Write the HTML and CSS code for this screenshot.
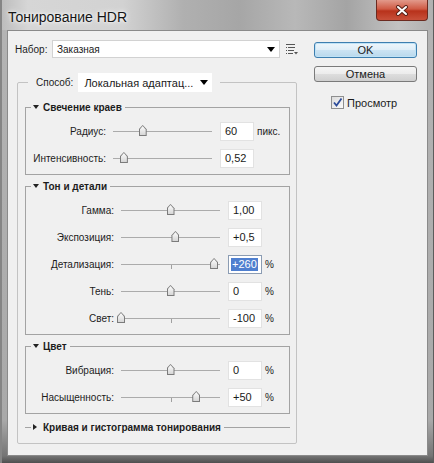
FILE: index.html
```html
<!DOCTYPE html>
<html lang="ru">
<head>
    <meta charset="UTF-8">
    <meta name="viewport" content="width=device-width, initial-scale=1.0">
    <title>Тонирование HDR</title>
    <link rel="stylesheet" href="styles.css">
</head>
<body>
    <div class="window">
        <div class="titlebar">
            <span class="title">Тонирование HDR</span>
            <button class="close" aria-label="Закрыть">
                <svg width="14" height="11" viewBox="0 0 14 11">
                    <path d="M3 2L11 9M11 2L3 9" stroke="#5a2218" stroke-width="4" stroke-linecap="round"/>
                    <path d="M3 2L11 9M11 2L3 9" stroke="#fff" stroke-width="2" stroke-linecap="round"/>
                </svg>
            </button>
        </div>

        <div class="client">
            <div class="main">
                <div class="preset">
                    <span class="preset-label">Набор:</span>
                    <div class="combo combo-preset"><span>Заказная</span><i class="arrow"></i></div>
                    <svg class="menu-icon" width="12" height="11" viewBox="0 0 12 11">
                        <g fill="#555">
                            <rect x="0" y="0" width="9" height="1"/>
                            <rect x="0" y="3" width="1" height="1"/><rect x="2" y="3" width="7" height="1"/>
                            <rect x="0" y="6" width="1" height="1"/><rect x="2" y="6" width="6" height="1"/>
                            <rect x="0" y="9" width="1" height="1"/><rect x="2" y="9" width="5" height="1"/>
                            <path d="M8 8h4l-2 2.5z"/>
                        </g>
                    </svg>
                </div>

                <fieldset class="group">
                    <legend class="group-legend">
                        <span>Способ:</span>
                        <div class="combo combo-method"><span>Локальная адаптац...</span><i class="arrow"></i></div>
                    </legend>

                    <fieldset class="panel panel-edge">
                        <legend class="panel-legend"><i class="tri-down"></i>Свечение краев</legend>
                        <div class="rows">
                            <div class="row">
                                <span class="label">Радиус:</span>
                                <div class="slider"><i class="thumb" style="left: 30%"></i></div>
                                <span class="field">60</span>
                                <span class="unit">пикс.</span>
                            </div>
                            <div class="row">
                                <span class="label">Интенсивность:</span>
                                <div class="slider"><i class="thumb" style="left: 11%"></i></div>
                                <span class="field">0,52</span>
                            </div>
                        </div>
                    </fieldset>

                    <fieldset class="panel">
                        <legend class="panel-legend"><i class="tri-down"></i>Тон и детали</legend>
                        <div class="rows">
                            <div class="row">
                                <span class="label">Гамма:</span>
                                <div class="slider"><i class="thumb" style="left: 50%"></i></div>
                                <span class="field">1,00</span>
                            </div>
                            <div class="row">
                                <span class="label">Экспозиция:</span>
                                <div class="slider"><i class="thumb" style="left: 55%"></i></div>
                                <span class="field">+0,5</span>
                            </div>
                            <div class="row">
                                <span class="label">Детализация:</span>
                                <div class="slider"><i class="tick"></i><i class="thumb" style="left: 94%"></i></div>
                                <span class="field field-focus"><span class="selected">+260</span></span>
                                <span class="unit">%</span>
                            </div>
                            <div class="row">
                                <span class="label">Тень:</span>
                                <div class="slider"><i class="thumb" style="left: 50%"></i></div>
                                <span class="field">0</span>
                                <span class="unit">%</span>
                            </div>
                            <div class="row">
                                <span class="label">Свет:</span>
                                <div class="slider"><i class="tick"></i><i class="thumb" style="left: 0%"></i></div>
                                <span class="field">-100</span>
                                <span class="unit">%</span>
                            </div>
                        </div>
                    </fieldset>

                    <fieldset class="panel">
                        <legend class="panel-legend"><i class="tri-down"></i>Цвет</legend>
                        <div class="rows">
                            <div class="row">
                                <span class="label">Вибрация:</span>
                                <div class="slider"><i class="thumb" style="left: 50%"></i></div>
                                <span class="field">0</span>
                                <span class="unit">%</span>
                            </div>
                            <div class="row">
                                <span class="label">Насыщенность:</span>
                                <div class="slider"><i class="tick"></i><i class="thumb" style="left: 76%"></i></div>
                                <span class="field">+50</span>
                                <span class="unit">%</span>
                            </div>
                        </div>
                    </fieldset>

                    <div class="collapsed"><i class="tri-right"></i>Кривая и гистограмма тонирования</div>
                </fieldset>
            </div>

            <div class="side">
                <button class="btn btn-default">OK</button>
                <button class="btn">Отмена</button>
                <label class="check">
                    <span class="check-box">
                        <svg width="11" height="11" viewBox="0 0 11 11">
                            <path d="M2 5.5L4.5 8.5L9.5 1.5" fill="none" stroke="#2d4c9a" stroke-width="1.8"/>
                        </svg>
                    </span>
                    Просмотр
                </label>
            </div>
        </div>
    </div>
</body>
</html>
```

FILE: styles.css
```css
* {
    box-sizing: border-box;
}

body {
    margin: 0;
    font-family: "Liberation Sans", Arial, sans-serif;
    font-size: 10px;
    color: #1c1c1c;
    background: #7a7a7a;
}

/* window frame */
.window {
    width: 434px;
    height: 463px;
    display: flex;
    flex-direction: column;
    background: linear-gradient(to bottom, #b4b4b4 0, #a9a9a9 420px, #747474 456px, #4f4f4f 463px);
    border-left: 2px solid #858585;
    border-right: 1px solid #5c5c5c;
}

.titlebar {
    height: 30px;
    flex: none;
    display: flex;
    justify-content: space-between;
    align-items: flex-start;
    background: linear-gradient(90deg, #bdbdbd 0%, #d6d6d6 6%, #d2d2d2 28%, #b0b0b0 42%, #a6a6a6 55%, #b8b8b8 68%, #a4a4a4 80%, #c2c2c2 92%, #b0b0b0 100%);
}

.title {
    padding: 9px 0 0 6px;
    font-size: 14px;
    line-height: 16px;
    color: #161616;
    text-shadow: 0 0 6px #fff, 0 0 3px #fff;
}

.close {
    width: 52px;
    height: 21px;
    margin-right: 5px;
    padding: 0;
    display: flex;
    align-items: center;
    justify-content: center;
    border: 1px solid #6b2a20;
    border-top: none;
    border-radius: 0 0 4px 4px;
    background: linear-gradient(#e29a8b, #cf5a44 45%, #b8321b 55%, #c8503a);
}

/* dialog body */
.client {
    flex: 1;
    display: flex;
    margin: 0 5px 7px 5px;
    padding: 9px 0 0 7px;
    background: #f0f0f0;
    border: 1px solid #8a8a8a;
}

.main {
    width: 283px;
}

.preset {
    display: flex;
    align-items: center;
    height: 18px;
}

.preset-label {
    width: 37px;
}

.combo {
    display: flex;
    align-items: center;
    justify-content: space-between;
    background: #fff;
    color: #1a1a1a;
}

.combo-preset {
    width: 228px;
    height: 18px;
    padding: 0 4px 0 4px;
    border: 1px solid #d2d2d2;
}

.combo-method {
    width: 134px;
    height: 19px;
    margin-left: 5px;
    padding: 0 4px 0 6px;
    font-size: 11px;
}

.arrow {
    width: 0;
    height: 0;
    border-top: 5px solid #000;
    border-left: 4px solid transparent;
    border-right: 4px solid transparent;
}

.menu-icon {
    margin-left: 6px;
}

/* group boxes */
fieldset {
    min-width: 0;
    margin: 0;
    padding: 0;
}

.group {
    width: 280px;
    margin: 15px 0 0 2px;
    padding-bottom: 9px;
    border: 1px solid #c3c3c3;
    border-radius: 2px;
}

.group-legend {
    display: flex;
    align-items: center;
    margin-left: 10px;
    padding: 0 8px;
}

.panel {
    margin: 4px 6px 0 7px;
    border: 1px solid #a3a3a3;
    --label-w: 88px;
}

.group-legend + .panel {
    margin-top: 8px;
}

.panel-edge {
    --label-w: 80px;
}

.panel-legend {
    display: flex;
    align-items: center;
    height: 14px;
    margin-left: 5px;
    padding: 0 3px 0 2px;
    font-weight: bold;
}

.tri-down {
    width: 0;
    height: 0;
    margin-right: 4px;
    border-top: 4px solid #222;
    border-left: 3px solid transparent;
    border-right: 3px solid transparent;
}

.tri-right {
    width: 0;
    height: 0;
    margin-right: 6px;
    border-left: 4px solid #222;
    border-top: 3px solid transparent;
    border-bottom: 3px solid transparent;
}

.rows {
    display: flex;
    flex-direction: column;
    gap: 8px;
    padding: 8px 0 6px;
}

/* slider rows */
.row {
    display: flex;
    align-items: center;
    height: 19px;
}

.label {
    width: var(--label-w);
    text-align: right;
}

.slider {
    position: relative;
    width: 99px;
    height: 1px;
    margin-left: 7px;
    background: #ababab;
}

.tick {
    position: absolute;
    left: 50%;
    top: 1px;
    width: 1px;
    height: 4px;
    background: #a0a0a0;
}

.thumb {
    position: absolute;
    top: -6px;
    width: 8px;
    height: 11px;
    margin-left: -4px;
    background: #7b7b7b;
    clip-path: polygon(50% 0, 100% 38%, 100% 100%, 0 100%, 0 38%);
}

.thumb::after {
    content: "";
    position: absolute;
    inset: 1px;
    background: linear-gradient(#fdfdfd, #d6d6d6);
    clip-path: polygon(50% 0, 100% 38%, 100% 100%, 0 100%, 0 38%);
}

.field {
    width: 34px;
    height: 19px;
    margin-left: 8px;
    padding-left: 4px;
    font-size: 11px;
    line-height: 17px;
    color: #1a1a1a;
    background: #fff;
    border: 1px solid #e2e2e2;
}

.field-focus {
    padding-left: 2px;
    border-color: #8b9cb3;
}

.selected {
    display: inline-block;
    padding: 0 1px;
    line-height: 13px;
    color: #fff;
    background: #4f7fcf;
}

.unit {
    margin-left: 3px;
}

.collapsed {
    display: flex;
    align-items: center;
    height: 14px;
    margin: 6px 6px 0 7px;
    font-weight: bold;
}

.collapsed::before {
    content: "";
    width: 6px;
    margin-right: 2px;
    border-top: 1px solid #a3a3a3;
}

.collapsed::after {
    content: "";
    flex: 1;
    margin-left: 3px;
    border-top: 1px solid #a3a3a3;
}

/* buttons column */
.side {
    width: 103px;
    margin-left: 16px;
    padding-top: 2px;
    display: flex;
    flex-direction: column;
}

.btn {
    height: 16px;
    padding: 0;
    font-family: "Liberation Sans", Arial, sans-serif;
    font-size: 11px;
    line-height: 14px;
    color: #1a1a1a;
    border: 1px solid #7a7a7a;
    border-radius: 3px;
    background: linear-gradient(#f5f5f5, #ececec 48%, #dddddd 52%, #cfcfcf);
}

.btn-default {
    border-color: #3d7eaf;
    background: linear-gradient(#eef6fb, #dfeef8 48%, #cbe3f3 52%, #b9d8ec);
    box-shadow: inset 0 0 0 1px #bfe2f6;
}

.btn + .btn {
    margin-top: 8px;
}

.check {
    display: flex;
    align-items: center;
    margin-top: 14px;
    padding-left: 17px;
    font-size: 11px;
}

.check-box {
    width: 13px;
    height: 13px;
    margin-right: 3px;
    display: flex;
    align-items: center;
    justify-content: center;
    border: 1px solid #8e8f8f;
    background: linear-gradient(135deg, #dcdcdc, #fbfbfb);
}
```
